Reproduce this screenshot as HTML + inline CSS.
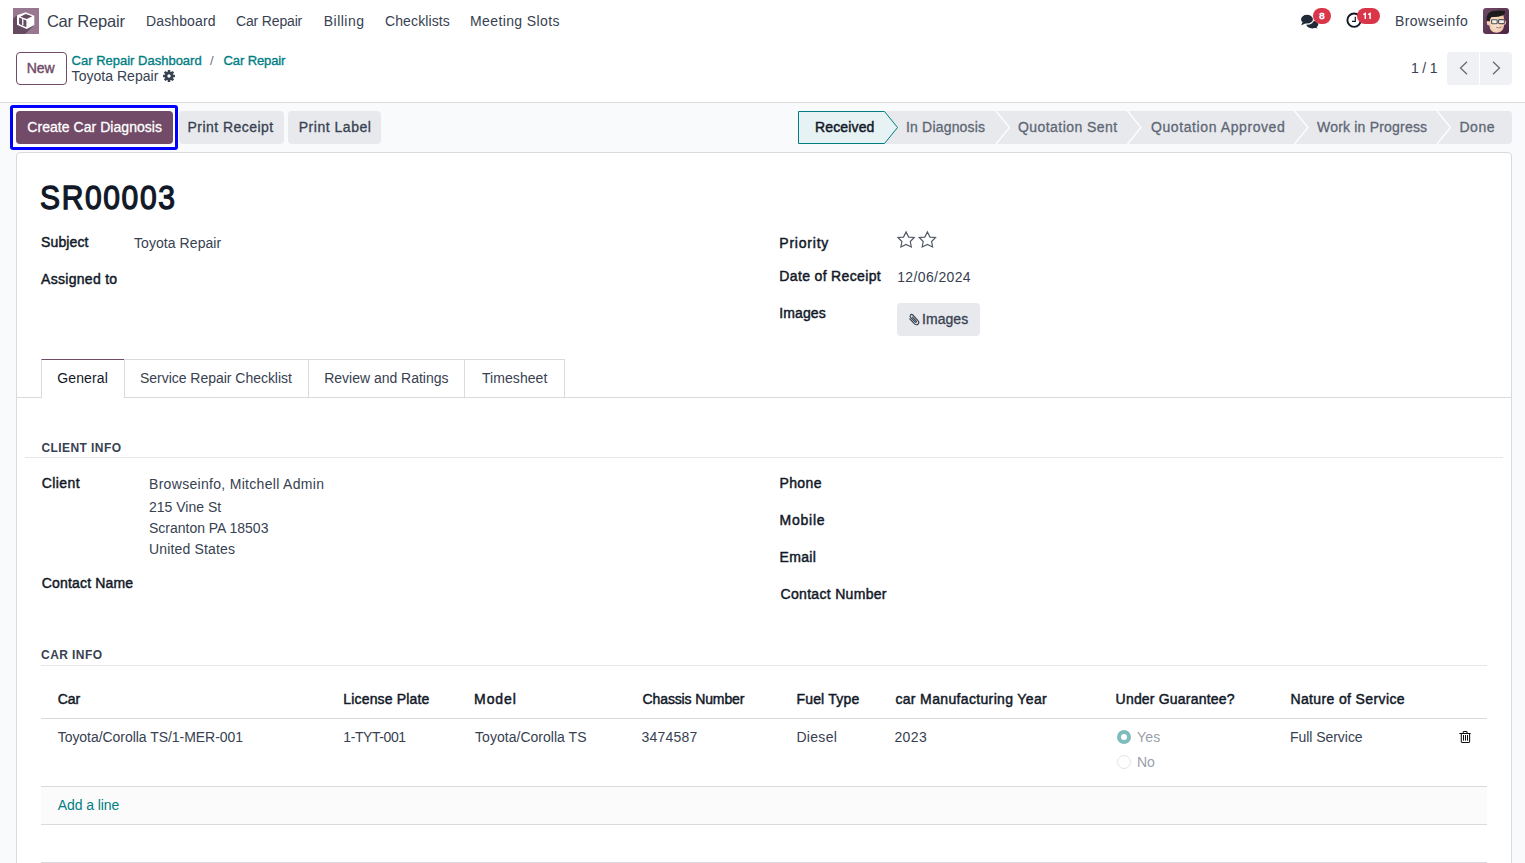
<!DOCTYPE html>
<html><head><meta charset="utf-8">
<style>
html,body{margin:0;padding:0}
body{width:1525px;height:863px;overflow:hidden;position:relative;background:#fff;font-family:"Liberation Sans",sans-serif}
.t{position:absolute;white-space:nowrap;line-height:1;font-family:"Liberation Sans",sans-serif}
.a{position:absolute;box-sizing:border-box}
svg{position:absolute;overflow:visible}
</style></head><body>
<!-- control panel gray area -->
<div class="a" style="left:0;top:102px;width:1525px;height:761px;background:#f9fafb;border-top:1px solid #d8dadd"></div>
<!-- sheet -->
<div class="a" style="left:16px;top:152px;width:1496px;height:740px;background:#fff;border:1px solid #d8dadd;border-radius:4px"></div>

<!-- logo -->
<svg style="left:13px;top:8px" width="26" height="26" viewBox="0 0 26 26">
  <rect width="26" height="26" fill="#987891"/>
  <path d="M0 10.8 L4.2 7 L4.2 16.7 L13.7 20.7 L21.1 17 L12 26 L0 26 Z" fill="#654b60"/>
  <path d="M12.6 4.2 L4 7.2 L4 16.8 L13.7 21 L21.3 17.1 L21.3 7.8 Z" fill="#fff"/>
  <path d="M12.6 6.1 L7.4 8.8 L13.7 11 L19.3 8.2 Z" fill="#654b60"/>
  <path d="M6.1 9.6 L13.4 12.4 L13.4 19.2 L6.1 15.9 Z" fill="#654b60"/>
  <rect x="9.1" y="10.2" width="1.3" height="7" fill="#fff"/>
</svg>

<!-- chat icon -->
<svg style="left:1300px;top:13px" width="20" height="17" viewBox="0 0 20 17">
  <ellipse cx="12.3" cy="11.6" rx="5.9" ry="3.9" fill="#1f2937"/>
  <path d="M15 13 L17.8 15.6 L13 14.6 Z" fill="#1f2937"/>
  <ellipse cx="7" cy="6.2" rx="6.6" ry="5" fill="#1f2937" stroke="#fff" stroke-width="1.3"/>
  <path d="M2.6 9 L1.2 12.2 L6 10.3 Z" fill="#1f2937"/>
</svg>
<div class="a" style="left:1313px;top:8px;width:17.5px;height:16px;border-radius:8px;background:#d9364a"></div>
<!-- clock icon -->
<svg style="left:1346px;top:12px" width="17" height="17" viewBox="0 0 17 17">
  <circle cx="8.1" cy="8.2" r="6.7" fill="none" stroke="#111827" stroke-width="1.9"/>
  <path d="M9.3 4.8 V9.3 H6" fill="none" stroke="#111827" stroke-width="1.2"/>
</svg>
<div class="a" style="left:1356.5px;top:8px;width:23.5px;height:16px;border-radius:8px;background:#d9364a"></div>
<svg style="left:1362px;top:13px" width="12" height="7" viewBox="0 0 12 7">
  <path d="M1.4 1.7 L3.3 0.5 V6 M6.2 1.7 L8.1 0.5 V6" fill="none" stroke="#fff" stroke-width="1.45"/>
</svg>
<!-- avatar -->
<svg style="left:1483px;top:8px" width="26" height="26" viewBox="0 0 26 26">
  <defs><linearGradient id="ag" x1="0" y1="0" x2="1" y2="1"><stop offset="0" stop-color="#6f4a66"/><stop offset="1" stop-color="#4a2440"/></linearGradient>
  <radialGradient id="sk" cx="0.45" cy="0.55" r="0.6"><stop offset="0" stop-color="#fde9d6"/><stop offset="1" stop-color="#eec3a3"/></radialGradient></defs>
  <rect width="26" height="26" rx="3" fill="url(#ag)"/>
  <ellipse cx="5.6" cy="15" rx="1.8" ry="2.4" fill="#f2cdb0"/>
  <ellipse cx="21.4" cy="14.5" rx="1.6" ry="2.2" fill="#f2cdb0"/>
  <path d="M6 9 Q6 5 13 5 Q21 5 21 10 L21 18 Q20 24.5 13.5 24.8 Q7 24.5 6.5 18 Z" fill="url(#sk)"/>
  <path d="M3.6 12.5 Q3 4 10 3 Q17 1.8 22.3 3 Q22 6.5 19.5 7.6 Q14 9.5 8.5 9 Q7 10 6.6 13.5 Z" fill="#1c1c1c"/>
  <rect x="8.6" y="11.8" width="5.6" height="4" rx="0.8" fill="#f4efe9" stroke="#555" stroke-width="1.1"/>
  <rect x="15.6" y="11.6" width="5.8" height="4" rx="0.8" fill="#f4efe9" stroke="#555" stroke-width="1.1"/>
  <path d="M13.2 19.2 Q15.8 20.8 18.5 19" fill="#fff" stroke="#9a6a6a" stroke-width="0.9"/>
</svg>

<!-- New button -->
<div class="a" style="left:16px;top:52px;width:51px;height:33px;border:1px solid #714b67;border-radius:4px;background:#fff"></div>
<!-- gear -->
<svg style="left:163px;top:70px" width="12" height="12" viewBox="0 0 12 12">
  <g fill="#374151"><circle cx="6" cy="6" r="4.3"/>
  <rect x="4.7" y="0" width="2.6" height="12" rx="0.5"/>
  <rect x="4.7" y="0" width="2.6" height="12" rx="0.5" transform="rotate(45 6 6)"/>
  <rect x="4.7" y="0" width="2.6" height="12" rx="0.5" transform="rotate(90 6 6)"/>
  <rect x="4.7" y="0" width="2.6" height="12" rx="0.5" transform="rotate(135 6 6)"/></g>
  <circle cx="6" cy="6" r="1.7" fill="#fff"/>
</svg>
<!-- pager -->
<div class="a" style="left:1447px;top:52px;width:32px;height:33px;background:#f0f1f4;border-radius:4px 0 0 4px"></div>
<div class="a" style="left:1480px;top:52px;width:32px;height:33px;background:#f0f1f4;border-radius:0 4px 4px 0"></div>
<svg style="left:1459px;top:61px" width="9" height="14" viewBox="0 0 9 14"><path d="M8 0.7 L1.5 7 L8 13.3" fill="none" stroke="#6b6b6b" stroke-width="1.3"/></svg>
<svg style="left:1491.5px;top:61px" width="9" height="14" viewBox="0 0 9 14"><path d="M1 0.7 L7.5 7 L1 13.3" fill="none" stroke="#6b6b6b" stroke-width="1.3"/></svg>

<!-- action buttons -->
<div class="a" style="left:10px;top:105px;width:168px;height:45px;border:3px solid #0000ff;border-radius:3px;background:#fff"></div>
<div class="a" style="left:16px;top:111px;width:157px;height:33px;background:#714b67;border-radius:4px"></div>
<div class="a" style="left:179px;top:111px;width:105px;height:33px;background:#e7e9ed;border-radius:4px"></div>
<div class="a" style="left:288px;top:111px;width:93px;height:33px;background:#e7e9ed;border-radius:4px"></div>

<!-- statusbar -->
<div class="a" style="left:884px;top:111px;width:628px;height:33px;background:#e7e9ed;border-radius:0 4px 4px 0"></div>
<svg style="left:798px;top:111px" width="101" height="33" viewBox="0 0 101 33">
  <path d="M0.5 0.5 H86.5 L99.5 16.5 L86.5 32.5 H0.5 Z" fill="#e6f2f3" stroke="#017e84" stroke-width="1"/>
</svg>
<svg style="left:990px;top:111px" width="520" height="33" viewBox="990 111 520 33">
  <g fill="none" stroke="#ffffff" stroke-width="1.2">
    <path d="M996 111 L1009.5 127.5 L996 144"/>
    <path d="M1127.5 111 L1141 127.5 L1127.5 144"/>
    <path d="M1294.5 111 L1308 127.5 L1294.5 144"/>
    <path d="M1437 111 L1450.5 127.5 L1437 144"/>
  </g>
</svg>

<!-- stars -->
<svg style="left:897px;top:231px" width="40" height="18" viewBox="0 0 40 18">
  <g fill="none" stroke="#525a66" stroke-width="1.2" stroke-linejoin="miter">
  <path d="M9.1 0.9 L11.7 6.1 L17.2 6.5 L13.3 10.5 L14.3 16 L9.1 13.5 L3.9 16 L4.9 10.5 L1 6.5 L6.5 6.1 Z"/>
  <path d="M30.4 0.9 L33 6.1 L38.5 6.5 L34.6 10.5 L35.6 16 L30.4 13.5 L25.2 16 L26.2 10.5 L22.3 6.5 L27.8 6.1 Z"/>
  </g>
</svg>
<!-- Images button -->
<div class="a" style="left:897px;top:303px;width:83px;height:33px;background:#e7e9ed;border-radius:4px"></div>
<svg style="left:908px;top:312.5px" width="12" height="13" viewBox="0 0 12 13">
  <g transform="translate(12,0) scale(-1,1)"><path d="M10.5 5.5 L5.5 10.8 Q3.5 12.6 1.8 11 Q0.3 9.3 2.2 7.3 L7.2 2 Q8.4 0.9 9.5 2 Q10.6 3.2 9.4 4.4 L4.9 9.1 Q4.2 9.7 3.7 9.2 Q3.2 8.6 3.9 8 L7.8 3.9" fill="none" stroke="#374151" stroke-width="1.1"/></g>
</svg>

<!-- tabs -->
<div class="a" style="left:16px;top:397px;width:1496px;height:1px;background:#d8dadd"></div>
<div class="a" style="left:41px;top:359px;width:84px;height:39px;background:#fff;border:1px solid #d8dadd;border-top:1px solid #714b67;border-bottom:none"></div>
<div class="a" style="left:124px;top:359px;width:185px;height:39px;border:1px solid #d8dadd"></div>
<div class="a" style="left:308px;top:359px;width:157px;height:39px;border:1px solid #d8dadd"></div>
<div class="a" style="left:464px;top:359px;width:101px;height:39px;border:1px solid #d8dadd"></div>

<!-- section lines -->
<div class="a" style="left:25px;top:457px;width:1478px;height:1px;background:#e5e7ea"></div>
<div class="a" style="left:41px;top:665px;width:1446px;height:1px;background:#e5e7ea"></div>
<!-- table lines -->
<div class="a" style="left:41px;top:718px;width:1446px;height:1px;background:#d8dadd"></div>
<div class="a" style="left:41px;top:786px;width:1446px;height:39px;background:#fbfbfb;border-top:1px solid #d8dadd;border-bottom:1px solid #d8dadd"></div>
<div class="a" style="left:41px;top:862px;width:1446px;height:1px;background:#d8dadd"></div>

<!-- radios -->
<div class="a" style="left:1117px;top:730px;width:14px;height:14px;border-radius:50%;border:4.5px solid #7fbcbe;background:#fff"></div>
<div class="a" style="left:1117px;top:755px;width:14px;height:14px;border-radius:50%;border:1px solid #e3e5e8;background:#fff"></div>
<!-- trash -->
<svg style="left:1459px;top:731px" width="12" height="12" viewBox="0 0 12 12">
  <g fill="none" stroke="#111" stroke-width="1.05">
   <path d="M0.3 2.5 H11.7"/><path d="M4 2.5 L4.3 0.9 Q4.4 0.5 5 0.5 H7.2 Q7.8 0.5 7.9 0.9 L8.3 2.5"/>
   <path d="M2.3 2.5 V10.6 Q2.3 11.5 3.2 11.5 H9.7 Q10.6 11.5 10.6 10.6 V2.5"/>
  </g>
  <g fill="#111"><rect x="4" y="4" width="1" height="5.6"/><rect x="6" y="4" width="1" height="5.6"/><rect x="8" y="4" width="1" height="5.6"/></g>
</svg>

<span class="t" style="left:46.90px;top:13.00px;font-size:16.5px;font-weight:400;color:#374151;letter-spacing:-0.189px;">Car Repair</span>
<span class="t" style="left:146.00px;top:14.00px;font-size:14px;font-weight:400;color:#374151;letter-spacing:0.125px;">Dashboard</span>
<span class="t" style="left:236.00px;top:14.00px;font-size:14px;font-weight:400;color:#374151;letter-spacing:-0.156px;">Car Repair</span>
<span class="t" style="left:323.70px;top:14.00px;font-size:14px;font-weight:400;color:#374151;letter-spacing:0.500px;">Billing</span>
<span class="t" style="left:385.00px;top:14.00px;font-size:14px;font-weight:400;color:#374151;letter-spacing:0.111px;">Checklists</span>
<span class="t" style="left:470.00px;top:14.00px;font-size:14px;font-weight:400;color:#374151;letter-spacing:0.392px;">Meeting Slots</span>
<span class="t" style="left:1395.00px;top:14.00px;font-size:14px;font-weight:400;color:#374151;letter-spacing:0.400px;">Browseinfo</span>
<span class="t" style="left:1319.20px;top:11.00px;font-size:9.5px;font-weight:400;color:#fff;letter-spacing:0.000px;-webkit-text-stroke:0.6px #fff;">8</span>
<span class="t" style="left:71.60px;top:54.00px;font-size:13px;font-weight:400;color:#017e84;letter-spacing:0.000px;-webkit-text-stroke:0.35px #017e84;">Car Repair Dashboard</span>
<span class="t" style="left:210.00px;top:54.00px;font-size:13px;font-weight:400;color:#6b7280;letter-spacing:0.000px;">/</span>
<span class="t" style="left:223.60px;top:54.00px;font-size:13px;font-weight:400;color:#017e84;letter-spacing:-0.111px;-webkit-text-stroke:0.35px #017e84;">Car Repair</span>
<span class="t" style="left:71.60px;top:69.00px;font-size:14px;font-weight:400;color:#374151;letter-spacing:0.033px;">Toyota Repair</span>
<span class="t" style="left:26.70px;top:61.00px;font-size:14px;font-weight:400;color:#714b67;letter-spacing:0.000px;-webkit-text-stroke:0.42px #714b67;">New</span>
<span class="t" style="left:1411.00px;top:61.00px;font-size:14px;font-weight:400;color:#374151;letter-spacing:-0.175px;">1 / 1</span>
<span class="t" style="left:27.30px;top:120.00px;font-size:14px;font-weight:400;color:#fff;letter-spacing:0.047px;-webkit-text-stroke:0.3px #fff;">Create Car Diagnosis</span>
<span class="t" style="left:187.50px;top:120.00px;font-size:14px;font-weight:400;color:#374151;letter-spacing:0.458px;-webkit-text-stroke:0.3px #374151;">Print Receipt</span>
<span class="t" style="left:298.70px;top:120.00px;font-size:14px;font-weight:400;color:#374151;letter-spacing:0.530px;-webkit-text-stroke:0.3px #374151;">Print Label</span>
<span class="t" style="left:815.00px;top:120.00px;font-size:14px;font-weight:400;color:#111827;letter-spacing:0.143px;-webkit-text-stroke:0.45px #111827;">Received</span>
<span class="t" style="left:906.00px;top:120.00px;font-size:14px;font-weight:400;color:#5f6775;letter-spacing:0.182px;-webkit-text-stroke:0.3px #5f6775;">In Diagnosis</span>
<span class="t" style="left:1018.00px;top:120.00px;font-size:14px;font-weight:400;color:#5f6775;letter-spacing:0.438px;-webkit-text-stroke:0.3px #5f6775;">Quotation Sent</span>
<span class="t" style="left:1151.00px;top:120.00px;font-size:14px;font-weight:400;color:#5f6775;letter-spacing:0.588px;-webkit-text-stroke:0.3px #5f6775;">Quotation Approved</span>
<span class="t" style="left:1317.00px;top:120.00px;font-size:14px;font-weight:400;color:#5f6775;letter-spacing:0.200px;-webkit-text-stroke:0.3px #5f6775;">Work in Progress</span>
<span class="t" style="left:1459.50px;top:120.00px;font-size:14px;font-weight:400;color:#5f6775;letter-spacing:0.500px;-webkit-text-stroke:0.3px #5f6775;">Done</span>
<span class="t" style="left:40.00px;top:181.00px;font-size:33.2px;font-weight:400;color:#111827;letter-spacing:1.800px;transform:scaleX(0.9041);transform-origin:0 0;-webkit-text-stroke:1.3px #111827;">SR00003</span>
<span class="t" style="left:41.00px;top:235.00px;font-size:14px;font-weight:400;color:#111827;letter-spacing:0.133px;-webkit-text-stroke:0.45px #111827;">Subject</span>
<span class="t" style="left:134.00px;top:236.00px;font-size:14px;font-weight:400;color:#374151;letter-spacing:0.067px;">Toyota Repair</span>
<span class="t" style="left:41.00px;top:272.00px;font-size:14px;font-weight:400;color:#111827;letter-spacing:0.300px;-webkit-text-stroke:0.45px #111827;">Assigned to</span>
<span class="t" style="left:779.30px;top:236.00px;font-size:14px;font-weight:400;color:#111827;letter-spacing:0.786px;-webkit-text-stroke:0.45px #111827;">Priority</span>
<span class="t" style="left:779.30px;top:269.00px;font-size:14px;font-weight:400;color:#111827;letter-spacing:0.350px;-webkit-text-stroke:0.45px #111827;">Date of Receipt</span>
<span class="t" style="left:897.20px;top:270.00px;font-size:14px;font-weight:400;color:#374151;letter-spacing:0.378px;">12/06/2024</span>
<span class="t" style="left:779.30px;top:306.00px;font-size:14px;font-weight:400;color:#111827;letter-spacing:0.100px;-webkit-text-stroke:0.45px #111827;">Images</span>
<span class="t" style="left:922.00px;top:312.00px;font-size:14px;font-weight:400;color:#374151;letter-spacing:0.060px;-webkit-text-stroke:0.3px #374151;">Images</span>
<span class="t" style="left:57.30px;top:371.00px;font-size:14px;font-weight:400;color:#111827;letter-spacing:0.117px;">General</span>
<span class="t" style="left:140.00px;top:371.00px;font-size:14px;font-weight:400;color:#374151;letter-spacing:-0.026px;">Service Repair Checklist</span>
<span class="t" style="left:324.20px;top:371.00px;font-size:14px;font-weight:400;color:#374151;letter-spacing:-0.012px;">Review and Ratings</span>
<span class="t" style="left:482.00px;top:371.00px;font-size:14px;font-weight:400;color:#374151;letter-spacing:0.062px;">Timesheet</span>
<span class="t" style="left:41.40px;top:442.00px;font-size:12px;font-weight:700;color:#374151;letter-spacing:0.430px;">CLIENT INFO</span>
<span class="t" style="left:41.80px;top:476.00px;font-size:14px;font-weight:400;color:#111827;letter-spacing:0.400px;-webkit-text-stroke:0.45px #111827;">Client</span>
<span class="t" style="left:149.00px;top:477.00px;font-size:14px;font-weight:400;color:#374151;letter-spacing:0.308px;">Browseinfo, Mitchell Admin</span>
<span class="t" style="left:149.00px;top:500.00px;font-size:14px;font-weight:400;color:#374151;letter-spacing:0.000px;">215 Vine St</span>
<span class="t" style="left:149.00px;top:521.00px;font-size:14px;font-weight:400;color:#374151;letter-spacing:-0.012px;">Scranton PA 18503</span>
<span class="t" style="left:149.00px;top:542.00px;font-size:14px;font-weight:400;color:#374151;letter-spacing:0.167px;">United States</span>
<span class="t" style="left:41.80px;top:576.00px;font-size:14px;font-weight:400;color:#111827;letter-spacing:0.164px;-webkit-text-stroke:0.45px #111827;">Contact Name</span>
<span class="t" style="left:779.50px;top:476.00px;font-size:14px;font-weight:400;color:#111827;letter-spacing:0.375px;-webkit-text-stroke:0.45px #111827;">Phone</span>
<span class="t" style="left:779.50px;top:513.00px;font-size:14px;font-weight:400;color:#111827;letter-spacing:0.780px;-webkit-text-stroke:0.45px #111827;">Mobile</span>
<span class="t" style="left:779.50px;top:550.00px;font-size:14px;font-weight:400;color:#111827;letter-spacing:0.325px;-webkit-text-stroke:0.45px #111827;">Email</span>
<span class="t" style="left:780.50px;top:587.00px;font-size:14px;font-weight:400;color:#111827;letter-spacing:0.315px;-webkit-text-stroke:0.45px #111827;">Contact Number</span>
<span class="t" style="left:41.10px;top:649.00px;font-size:12px;font-weight:700;color:#374151;letter-spacing:0.414px;">CAR INFO</span>
<span class="t" style="left:57.70px;top:692.00px;font-size:14px;font-weight:400;color:#111827;letter-spacing:0.000px;-webkit-text-stroke:0.45px #111827;">Car</span>
<span class="t" style="left:343.30px;top:692.00px;font-size:14px;font-weight:400;color:#111827;letter-spacing:0.167px;-webkit-text-stroke:0.45px #111827;">License Plate</span>
<span class="t" style="left:474.10px;top:692.00px;font-size:14px;font-weight:400;color:#111827;letter-spacing:0.900px;-webkit-text-stroke:0.45px #111827;">Model</span>
<span class="t" style="left:642.60px;top:692.00px;font-size:14px;font-weight:400;color:#111827;letter-spacing:-0.131px;-webkit-text-stroke:0.45px #111827;">Chassis Number</span>
<span class="t" style="left:796.40px;top:692.00px;font-size:14px;font-weight:400;color:#111827;letter-spacing:0.200px;-webkit-text-stroke:0.45px #111827;">Fuel Type</span>
<span class="t" style="left:895.40px;top:692.00px;font-size:14px;font-weight:400;color:#111827;letter-spacing:0.348px;-webkit-text-stroke:0.45px #111827;">car Manufacturing Year</span>
<span class="t" style="left:1115.60px;top:692.00px;font-size:14px;font-weight:400;color:#111827;letter-spacing:0.193px;-webkit-text-stroke:0.45px #111827;">Under Guarantee?</span>
<span class="t" style="left:1290.40px;top:692.00px;font-size:14px;font-weight:400;color:#111827;letter-spacing:0.375px;-webkit-text-stroke:0.45px #111827;">Nature of Service</span>
<span class="t" style="left:57.70px;top:730.00px;font-size:14px;font-weight:400;color:#374151;letter-spacing:-0.042px;">Toyota/Corolla TS/1-MER-001</span>
<span class="t" style="left:343.30px;top:730.00px;font-size:14px;font-weight:400;color:#374151;letter-spacing:-0.413px;">1-TYT-001</span>
<span class="t" style="left:475.10px;top:730.00px;font-size:14px;font-weight:400;color:#374151;letter-spacing:0.025px;">Toyota/Corolla TS</span>
<span class="t" style="left:641.60px;top:730.00px;font-size:14px;font-weight:400;color:#374151;letter-spacing:0.183px;">3474587</span>
<span class="t" style="left:796.40px;top:730.00px;font-size:14px;font-weight:400;color:#374151;letter-spacing:0.320px;">Diesel</span>
<span class="t" style="left:894.40px;top:730.00px;font-size:14px;font-weight:400;color:#374151;letter-spacing:0.433px;">2023</span>
<span class="t" style="left:1137.00px;top:730.00px;font-size:14px;font-weight:400;color:#9aa0aa;letter-spacing:0.250px;">Yes</span>
<span class="t" style="left:1137.00px;top:755.00px;font-size:14px;font-weight:400;color:#9aa0aa;letter-spacing:0.000px;">No</span>
<span class="t" style="left:1290.00px;top:730.00px;font-size:14px;font-weight:400;color:#374151;letter-spacing:-0.045px;">Full Service</span>
<span class="t" style="left:57.70px;top:798.00px;font-size:14px;font-weight:400;color:#017e84;letter-spacing:-0.078px;">Add a line</span>
</body></html>
